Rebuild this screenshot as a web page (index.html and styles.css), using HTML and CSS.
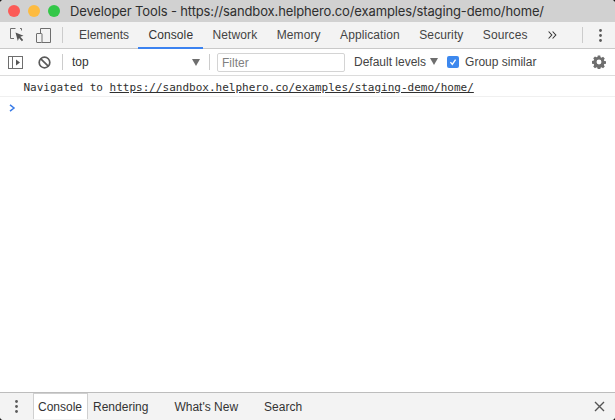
FILE: index.html
```html
<!DOCTYPE html>
<html lang="en">
<head>
<meta charset="utf-8">
<title>Developer Tools</title>
<link rel="stylesheet" href="styles.css">
</head>
<body>
<div class="window">
  <header class="titlebar">
    <div class="lights"><span class="light red"></span><span class="light yellow"></span><span class="light green"></span></div>
    <div class="title">Developer Tools - https://sandbox.helphero.co/examples/staging-demo/home/</div>
  </header>
  <nav class="tabbar">
    <div class="icons">
      <svg class="icon" width="15" height="14" viewBox="0 0 15 14"><path d="M5.5.5H.5v10H4" fill="none" stroke="#6e6e6e"/><path d="M10 .5h1.5v2" fill="none" stroke="#6e6e6e"/><path d="M5.5 4.5l8 3.2-3.2 1.1 2.9 3.2-1.3 1.2-2.9-3.2-1.2 3z" fill="#555"/></svg>
      <svg class="icon" width="15" height="15" viewBox="0 0 15 15"><path d="M4.5 5V.5h10v14H6" fill="none" stroke="#6e6e6e"/><rect x=".5" y="5.5" width="5.5" height="9" rx=".5" fill="none" stroke="#6e6e6e"/></svg>
    </div>
    <span class="sep sep-tabs"></span>
    <div class="tabs">
      <span class="tab">Elements</span>
      <span class="tab active">Console</span>
      <span class="tab">Network</span>
      <span class="tab">Memory</span>
      <span class="tab">Application</span>
      <span class="tab">Security</span>
      <span class="tab">Sources</span>
      <svg class="more" width="9" height="8" viewBox="0 0 9 8"><path d="M.6.5L3.8 4 .6 7.5M4.6.5L7.8 4 4.6 7.5" fill="none" stroke="#333" stroke-width="1.1"/></svg>
    </div>
    <span class="sep sep-end"></span>
    <svg class="dots" width="3" height="13" viewBox="0 0 3 13"><circle cx="1.5" cy="1.5" r="1.4"/><circle cx="1.5" cy="6.5" r="1.4"/><circle cx="1.5" cy="11.5" r="1.4"/></svg>
  </nav>
  <div class="toolbar">
    <svg class="icon" width="15" height="13" viewBox="0 0 15 13"><rect x=".5" y=".5" width="14" height="12" fill="none" stroke="#6e6e6e"/><path d="M4.5 0v13" stroke="#6e6e6e"/><path d="M8 3.5l4 3-4 3z" fill="#555"/></svg>
    <svg class="icon block" width="13" height="13" viewBox="0 0 13 13"><circle cx="6.5" cy="6.5" r="5.3" fill="none" stroke="#5a5a5a" stroke-width="1.7"/><path d="M2.8 2.8l7.4 7.4" stroke="#5a5a5a" stroke-width="1.7"/></svg>
    <span class="sep sep-ctx"></span>
    <div class="context"><span>top</span><i class="arrow"></i></div>
    <span class="sep sep-filter"></span>
    <div class="filter">Filter</div>
    <div class="levels"><span>Default levels</span><i class="arrow"></i></div>
    <span class="checkbox"><svg width="14" height="14" viewBox="0 0 14 14"><path d="M4 7.2l2.2 2.6L10 4.2" fill="none" stroke="#fff" stroke-width="1.6"/></svg></span>
    <span class="group">Group similar</span>
    <svg class="gear" width="14" height="14" viewBox="0 0 16 16"><path fill="#6e6e6e" fill-rule="evenodd" d="M6.6.6h2.8l.4 2 1.1.5 1.7-1.1 2 2-1.1 1.7.5 1.1 2 .4v2.8l-2 .4-.5 1.1 1.1 1.7-2 2-1.7-1.1-1.1.5-.4 2H6.6l-.4-2-1.1-.5-1.7 1.1-2-2 1.1-1.7-.5-1.1-2-.4V6.8l2-.4.5-1.1L1.4 3.6l2-2 1.7 1.1 1.1-.5zM8 5.2a2.8 2.8 0 1 0 0 5.6 2.8 2.8 0 0 0 0-5.6z"/></svg>
  </div>
  <main class="console">
    <div class="message">Navigated to <span class="link">https://sandbox.helphero.co/examples/staging-demo/home/</span></div>
    <div class="prompt"><svg width="7" height="8" viewBox="0 0 7 8"><path d="M1 .8L5 4 1 7.2" fill="none" stroke="#3a7ce8" stroke-width="1.5"/></svg></div>
  </main>
  <footer class="drawer">
    <svg class="dots drawer-dots" width="3" height="13" viewBox="0 0 3 13"><circle cx="1.5" cy="1.5" r="1.4"/><circle cx="1.5" cy="6.5" r="1.4"/><circle cx="1.5" cy="11.5" r="1.4"/></svg>
    <div class="drawer-tabs">
      <span class="dtab active">Console</span>
      <span class="dtab rendering">Rendering</span>
      <span class="dtab new">What's New</span>
      <span class="dtab search">Search</span>
    </div>
    <svg class="close" width="11" height="11" viewBox="0 0 11 11"><path d="M1 1l9 9M10 1l-9 9" stroke="#555" stroke-width="1.4"/></svg>
  </footer>
</div>
</body>
</html>
```
FILE: styles.css
```css
html, body {
  margin: 0;
  height: 100%;
  background: #1c1c1c;
  overflow: hidden;
}
.window {
  width: 615px;
  height: 420px;
  display: flex;
  flex-direction: column;
  background: #fff;
  border-radius: 4px;
  overflow: hidden;
  font-family: "Liberation Sans", Arial, sans-serif;
  font-size: 12px;
  color: #333;
}
.titlebar {
  height: 22px;
  flex: none;
  display: flex;
  align-items: center;
  background: #d1d1d1;
}
.lights {
  display: flex;
  gap: 8px;
  margin-left: 8px;
}
.light {
  width: 12px;
  height: 12px;
  border-radius: 50%;
}
.red { background: #fc5b57; }
.yellow { background: #fdbb40; }
.green { background: #33c748; }
.title {
  margin-left: 10px;
  font-size: 13px;
  color: #2e2e2e;
  white-space: nowrap;
  font-family: "Inter", sans-serif;
  letter-spacing: -0.13px;
}
.tabbar {
  height: 26px;
  flex: none;
  display: flex;
  align-items: center;
  background: #f3f3f3;
  border-bottom: 1px solid #c9c9c9;
}
.icons {
  display: flex;
  align-items: center;
  gap: 11px;
  margin-left: 10px;
}
.icon { display: block; flex: none; }
.sep {
  width: 1px;
  height: 16px;
  background: #ccc;
  flex: none;
}
.sep-tabs { margin-left: 11px; }
.tabs {
  display: flex;
  align-items: center;
  height: 100%;
  margin-left: 6px;
}
.tab {
  height: 26px;
  box-sizing: border-box;
  padding: 5px 10px 0;
  margin-right: -0.6px;
  margin-bottom: -1px;
  border-bottom: 2px solid transparent;
  color: #444;
  letter-spacing: 0.1px;
}
.tab:first-child { letter-spacing: 0; }
.tab.active {
  color: #333;
  border-bottom-color: #3b82f0;
}
.more { margin-left: 11px; flex: none; }
.sep-end { margin-left: 25px; }
.dots {
  margin-left: 16px;
  fill: #5a5a5a;
  flex: none;
}
.toolbar {
  height: 26px;
  flex: none;
  display: flex;
  align-items: center;
  border-bottom: 1px solid #dcdcdc;
  background: #fff;
  padding-left: 8px;
}
.block { margin-left: 15px; }
.sep-ctx { margin-left: 11px; }
.context {
  width: 128px;
  margin-left: 9px;
  display: flex;
  align-items: center;
  justify-content: space-between;
  color: #333;
}
.arrow {
  display: block;
  width: 0;
  height: 0;
  border-left: 4px solid transparent;
  border-right: 4px solid transparent;
  border-top: 7px solid #6e6e6e;
}
.sep-filter { margin-left: 9px; }
.filter {
  width: 122px;
  height: 17px;
  margin-left: 7px;
  padding-left: 4px;
  border: 1px solid #d4d4d4;
  border-radius: 2px;
  color: #808080;
  line-height: 18px;
}
.levels {
  margin-left: 9px;
  display: flex;
  align-items: center;
  gap: 4px;
  color: #444;
}
.levels .arrow { margin-top: -2px; }
.checkbox {
  width: 12px;
  height: 12px;
  margin-left: 9px;
  border-radius: 2px;
  background: #3d88ee;
  display: flex;
  align-items: center;
  justify-content: center;
}
.group {
  margin-left: 6px;
  color: #444;
}
.gear { margin-left: 56px; flex: none; }
.console {
  flex: 1;
  display: flex;
  flex-direction: column;
  font-family: "DejaVu Sans Mono", monospace;
  font-size: 11px;
  color: #303030;
}
.message {
  height: 20px;
  line-height: 23px;
  padding-left: 23.5px;
  border-bottom: 1px solid #f0f0f0;
  white-space: nowrap;
}
.link { text-decoration: underline; }
.prompt {
  padding: 7px 0 0 9px;
}
.prompt svg { display: block; }
.drawer {
  height: 27px;
  flex: none;
  display: flex;
  align-items: center;
  background: #f3f3f3;
  border-top: 1px solid #bdbdbd;
}
.drawer-dots { margin-left: 15px; }
.drawer-tabs {
  display: flex;
  height: 100%;
  margin-left: 15px;
}
.dtab {
  box-sizing: border-box;
  height: 26px;
  padding-top: 7px;
  color: #333;
}
.dtab.active {
  background: #fff;
  border: 1px solid #d0d0d0;
  border-bottom: none;
  padding: 6px 5px 0 4px;
}
.rendering { margin-left: 5px; }
.new { margin-left: 26px; }
.search { margin-left: 26px; }
.close { margin-left: auto; margin-right: 10px; flex: none; }
```
